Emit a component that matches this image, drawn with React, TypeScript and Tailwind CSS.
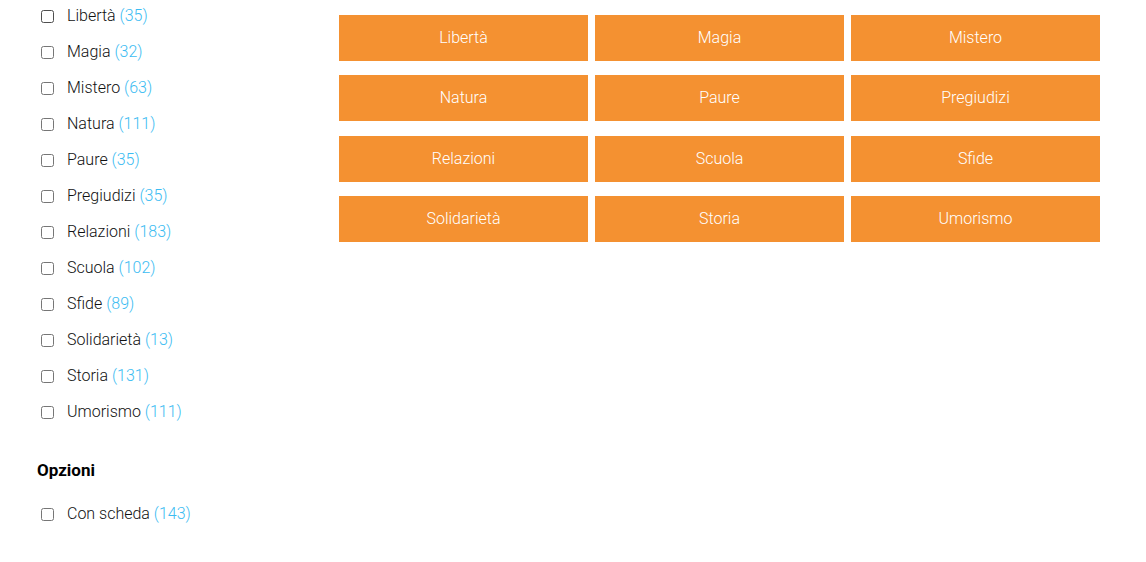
import React from "react";

const items: [string, number][] = [
  ["Libertà", 35],
  ["Magia", 32],
  ["Mistero", 63],
  ["Natura", 111],
  ["Paure", 35],
  ["Pregiudizi", 35],
  ["Relazioni", 183],
  ["Scuola", 102],
  ["Sfide", 89],
  ["Solidarietà", 13],
  ["Storia", 131],
  ["Umorismo", 111],
];

function Row({ label, count }: { label: string; count: number }) {
  return (
    <label className="flex items-center h-[36px]">
      <input type="checkbox" className="m-0 ml-[41px] w-[13px] h-[13px]" />
      <span className="ml-[13px] text-[16px] font-light text-[#111]">
        {label} <span className="text-[#3cbcf2]">({count})</span>
      </span>
    </label>
  );
}

export default function App() {
  return (
    <div className="w-[1146px] h-[562px] bg-white overflow-hidden flex font-['Roboto',sans-serif]">
      <div className="w-[339px] shrink-0 -mt-[2px]">
        {items.map(([l, c]) => (
          <Row key={l} label={l} count={c} />
        ))}
        <div className="ml-[37px] mt-[30px] text-[17px] font-bold text-black leading-[20px]">Opzioni</div>
        <div className="mt-[16px]">
          <Row label="Con scheda" count={143} />
        </div>
      </div>
      <div className="w-[761px] pt-[15px]">
        <div className="grid grid-cols-3 gap-x-[7px] gap-y-[14.33px]">
          {items.map(([l]) => (
            <div
              key={l}
              className="h-[46px] bg-[#f49131] flex items-center justify-center text-white font-light text-[16px]"
            >
              {l}
            </div>
          ))}
        </div>
      </div>
    </div>
  );
}
